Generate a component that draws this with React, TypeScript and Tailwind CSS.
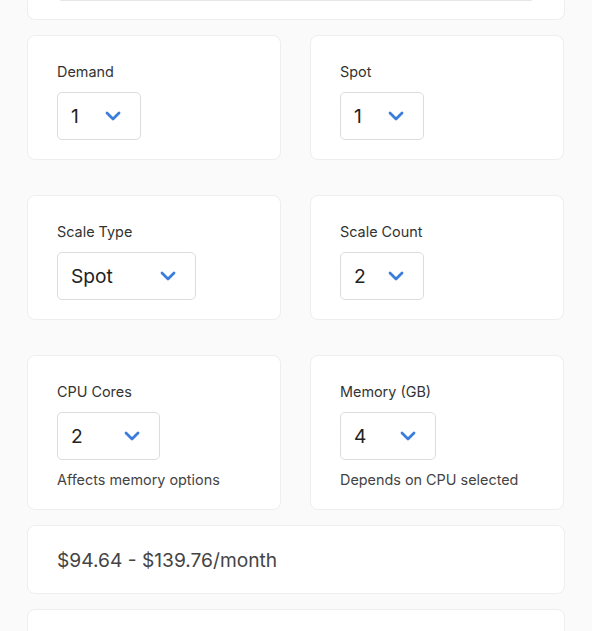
import React from "react";

type Field = {
  label: string;
  value: string;
  width: string;
  hint?: string;
};

const rows: Field[][] = [
  [
    { label: "Demand", value: "1", width: "w-[84px]" },
    { label: "Spot", value: "1", width: "w-[84px]" },
  ],
  [
    { label: "Scale Type", value: "Spot", width: "w-[139px]" },
    { label: "Scale Count", value: "2", width: "w-[84px]" },
  ],
  [
    { label: "CPU Cores", value: "2", width: "w-[103px]", hint: "Affects memory options" },
    { label: "Memory (GB)", value: "4", width: "w-[96px]", hint: "Depends on CPU selected" },
  ],
];

function Chevron() {
  return (
    <svg width="16" height="10" viewBox="0 0 16 10" fill="none" className="absolute right-[19px] top-1/2 -translate-y-1/2">
      <polyline points="2,2 8,8 14,2" stroke="#3b7ddd" strokeWidth="2.8" strokeLinecap="round" strokeLinejoin="round" />
    </svg>
  );
}

function SelectBox({ value, width }: { value: string; width: string }) {
  return (
    <div className={`relative ${width} h-[48px] flex items-center pl-[13px] border border-[#dcdcdc] rounded-[5px] bg-white text-[19.2px] text-[#222]`}>
      {value}
      <Chevron />
    </div>
  );
}

function Card({ field }: { field: Field }) {
  return (
    <div className="bg-white border border-[#eeeeee] rounded-[8px] pt-[26px] px-[29px] pb-[19px]">
      <div className="text-[14.4px] leading-5 text-[#333] mb-[10px]">{field.label}</div>
      <SelectBox value={field.value} width={field.width} />
      {field.hint && <div className="text-[14.4px] leading-5 text-[#444] mt-[10px]">{field.hint}</div>}
    </div>
  );
}

export default function App() {
  return (
    <div className="min-h-screen bg-[#fafafa] overflow-hidden" style={{ fontFamily: "Inter, 'Noto Sans', sans-serif" }}>
      <div className="-mt-[74px] px-[27px] flex flex-col gap-[15px] w-[592px] pb-10">
        <div className="bg-white border border-[#eeeeee] rounded-[8px] pt-[26px] px-[29px] pb-[18px]">
          <div className="h-[48px] border border-[#e6e6e6] rounded-[5px]" />
        </div>

        <div className="grid grid-cols-[254px_254px] gap-x-[29px] gap-y-[35px]">
          {rows.flat().map((f) => (
            <Card key={f.label} field={f} />
          ))}
        </div>

        <div className="bg-white border border-[#eeeeee] rounded-[8px] px-[29px] pt-[20px] pb-[19px]">
          <div className="text-[19.2px] leading-7 text-[#444]">$94.64 - $139.76/month</div>
        </div>

        <div className="bg-white border border-[#eeeeee] rounded-[8px] h-[120px]" />
      </div>
    </div>
  );
}
